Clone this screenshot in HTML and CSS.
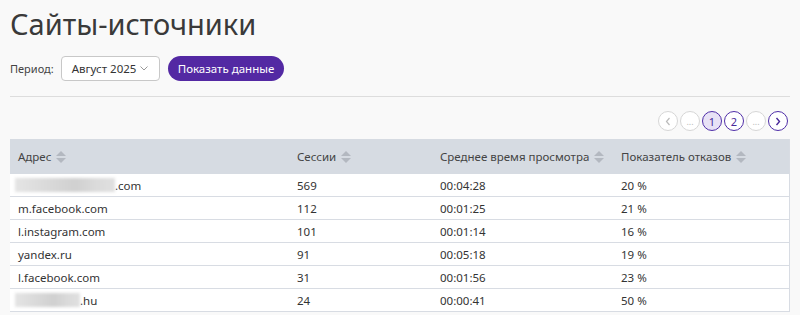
FILE: index.html
```html
<!DOCTYPE html>
<html lang="ru">
<head>
    <meta charset="UTF-8">
    <title>Сайты-источники</title>
    <link rel="stylesheet" href="styles.css">
</head>
<body>
    <h1 class="page-title">Сайты-источники</h1>

    <form class="filter-bar">
        <label class="filter-label">Период:</label>
        <div class="period-select">
            <span>Август 2025</span>
            <svg class="caret" width="8" height="5" viewBox="0 0 8 5"><path d="M0.5 0.5 L4 4 L7.5 0.5" fill="none" stroke="#999" stroke-width="1"/></svg>
        </div>
        <button type="button" class="show-btn">Показать данные</button>
    </form>

    <hr class="divider">

    <div class="pager">
        <span class="page-btn disabled">
            <svg width="6" height="9" viewBox="0 0 6 9"><path d="M4.5 1 L1.5 4.5 L4.5 8" fill="none" stroke="#bbb" stroke-width="1.2"/></svg>
        </span>
        <span class="page-btn disabled">...</span>
        <span class="page-btn current">1</span>
        <span class="page-btn">2</span>
        <span class="page-btn disabled">...</span>
        <span class="page-btn">
            <svg width="6" height="9" viewBox="0 0 6 9"><path d="M1.5 1 L4.5 4.5 L1.5 8" fill="none" stroke="#4a2a9a" stroke-width="1.4"/></svg>
        </span>
    </div>

    <table class="sources">
        <colgroup>
            <col class="col-addr">
            <col class="col-sess">
            <col class="col-time">
            <col>
        </colgroup>
        <thead>
            <tr>
                <th>Адрес <span class="sort"></span></th>
                <th>Сессии <span class="sort"></span></th>
                <th>Среднее время просмотра <span class="sort"></span></th>
                <th>Показатель отказов <span class="sort"></span></th>
            </tr>
        </thead>
        <tbody>
            <tr><td><span class="blur" style="width: 100px"></span>.com</td><td>569</td><td>00:04:28</td><td>20 %</td></tr>
            <tr><td>m.facebook.com</td><td>112</td><td>00:01:25</td><td>21 %</td></tr>
            <tr><td>l.instagram.com</td><td>101</td><td>00:01:14</td><td>16 %</td></tr>
            <tr><td>yandex.ru</td><td>91</td><td>00:05:18</td><td>19 %</td></tr>
            <tr><td>l.facebook.com</td><td>31</td><td>00:01:56</td><td>23 %</td></tr>
            <tr><td><span class="blur" style="width: 65px"></span>.hu</td><td>24</td><td>00:00:41</td><td>50 %</td></tr>
        </tbody>
    </table>
</body>
</html>
```

FILE: styles.css
```css
body {
    font-family: "Noto Sans", "Open Sans", sans-serif;
    background-color: #f9f9f9;
    color: #333;
    margin: 0;
    padding: 0 10px;
}

.page-title {
    font-size: 29px;
    font-weight: 400;
    color: #3a3a3a;
    margin: 0;
    padding-top: 2px;
    line-height: 43px;
}

.filter-bar {
    display: flex;
    align-items: center;
    margin-top: 11px;
    height: 25px;
}

.filter-label {
    font-size: 11px;
    color: #444;
    margin-right: 7px;
}

.period-select {
    display: flex;
    align-items: center;
    justify-content: space-between;
    box-sizing: border-box;
    width: 99px;
    height: 25px;
    padding: 0 11px 0 10px;
    border: 1px solid #c8c8c8;
    border-radius: 4px;
    background: #fff;
    font-size: 11.5px;
    color: #333;
    white-space: nowrap;
}

.show-btn {
    margin-left: 8px;
    height: 25px;
    padding: 0 10px;
    border: none;
    border-radius: 13px;
    background-color: #5329a3;
    color: #fff;
    font-family: inherit;
    font-size: 11.5px;
    white-space: nowrap;
    cursor: pointer;
}

.divider {
    border: none;
    border-top: 1px solid #ddd;
    margin: 15px 0 0;
}

.pager {
    display: flex;
    justify-content: flex-end;
    gap: 2px;
    margin-top: 14px;
    padding-right: 2px;
}

.page-btn {
    display: flex;
    align-items: center;
    justify-content: center;
    box-sizing: border-box;
    width: 20px;
    height: 20px;
    border: 1px solid #4f2ea8;
    border-radius: 50%;
    font-size: 11px;
    color: #4a2a9a;
    background: #fff;
}

.page-btn.disabled {
    border-color: #d6d6d6;
    color: #bbb;
    font-size: 9px;
}

.page-btn.current {
    background: #e8e2f6;
}

.sources {
    width: 100%;
    table-layout: fixed;
    margin-top: 8px;
    border-collapse: collapse;
    font-size: 11.5px;
    border-right: 1px solid #d8dce3;
}

.col-addr { width: 279px; }
.col-sess { width: 143px; }
.col-time { width: 181px; }

.sources th {
    background-color: #d6dbe2;
    height: 35px;
    padding: 0 8px;
    text-align: left;
    font-weight: 400;
    color: #444;
    white-space: nowrap;
}

.sources td {
    background: #fff;
    height: 22px;
    padding: 0 8px;
    border-bottom: 1px solid #d8dce3;
    color: #333;
    white-space: nowrap;
}

.sort {
    display: inline-block;
    position: relative;
    width: 10px;
    height: 12px;
    vertical-align: -2px;
    margin-left: 2px;
}

.sort::before,
.sort::after {
    content: "";
    position: absolute;
    left: 0;
    border-left: 5px solid transparent;
    border-right: 5px solid transparent;
}

.sort::before {
    top: 0;
    border-bottom: 5px solid #b3b8c0;
}

.sort::after {
    bottom: 0;
    border-top: 5px solid #b3b8c0;
}

.blur {
    display: inline-block;
    height: 14px;
    vertical-align: -2px;
    margin-left: -3px;
    background: linear-gradient(90deg, #e4e4e4, #d0d0d0 60%, #dadada 80%, #e0e0e0);
    filter: blur(1.5px);
}
```
